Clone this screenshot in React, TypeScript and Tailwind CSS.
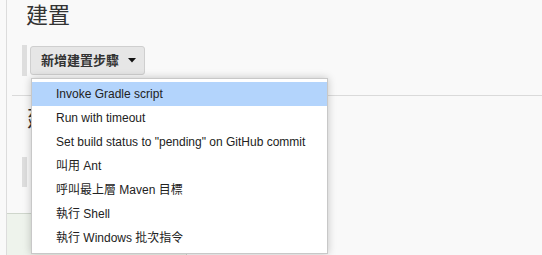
import React from "react";

const items = [
  "Invoke Gradle script",
  "Run with timeout",
  'Set build status to "pending" on GitHub commit',
  "叫用 Ant",
  "呼叫最上層 Maven 目標",
  "執行 Shell",
  "執行 Windows 批次指令",
];

export default function App() {
  return (
    <div
      className="relative w-[542px] h-[255px] overflow-hidden bg-[#f9f9f9] text-[#333]"
      style={{ fontFamily: '"Liberation Sans", Arial, "Noto Sans CJK TC", sans-serif' }}
    >
      <div className="ml-[6px] h-full border-l border-[#dcdcdc] flex flex-col">
        <div className="pl-[19px] pt-[3px] h-[30px] text-[22px] leading-[26px] font-normal">建置</div>
        <div className="mt-[16px] ml-[15px] flex items-start">
          <div className="w-[5px] h-[31px] bg-[#dedede]" />
          <button className="ml-[3px] mt-[1px] h-[29px] w-[115px] rounded-[3px] border border-[#cfcfcf] bg-[#e6e6e6] flex items-center pl-[10px] text-[13px] font-bold text-[#333]">
            <span>新增建置步驟</span>
            <svg className="ml-[9px]" width="8" height="5" viewBox="0 0 8 5">
              <path d="M0 0 H8 L4 4.5 Z" fill="#111" />
            </svg>
          </button>
        </div>
        <div className="mt-[19px] ml-[5px] border-t border-[#dadada]" />
        <div className="ml-[20px] mt-[10px] h-[54px] w-[5px] overflow-hidden text-[22px] leading-[26px] whitespace-nowrap">建</div>
        <div className="ml-[15px] w-[5px] h-[31px] bg-[#dedede]" />
        <div className="mt-[26px] h-[44px] w-[180px] border-t border-r border-[#cfd6cc] bg-[#eef3ec]" />
      </div>
      <div className="absolute left-[31px] top-[78px] w-[297px] border border-[#c8c8c8] bg-white pt-[3px] pb-[3px] shadow-[0_0_8px_rgba(0,0,0,0.22)]">
        {items.map((t, i) => (
          <div
            key={i}
            className={
              "h-[24px] pl-[24px] flex items-center text-[12px] text-[#222] " +
              (i === 0 ? "bg-[#b3d4fc]" : "")
            }
          >
            {t}
          </div>
        ))}
      </div>
    </div>
  );
}
